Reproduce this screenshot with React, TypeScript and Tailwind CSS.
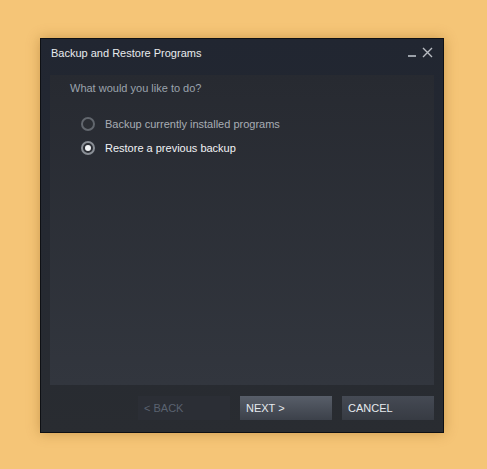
import React from "react";

export default function App() {
  return (
    <div className="w-[487px] h-[469px] bg-[#f5c577] flex items-start justify-start" style={{ fontFamily: '"Liberation Sans", Arial, sans-serif' }}>
      <div className="mt-[38px] ml-[40px] w-[404px] h-[395px] border border-[#0e1014] bg-gradient-to-b from-[#212631] to-[#292c31] flex flex-col shadow-[0_0_12px_rgba(150,100,30,0.45)]">
        <div className="flex items-start justify-between h-[36px] pl-[10px] pr-[10px] pt-[8px]">
          <span className="text-[11px] text-[#e8ebee] leading-[13px]">Backup and Restore Programs</span>
          <div className="flex items-center gap-[5px] mt-[-1px]">
            <svg width="9" height="12" viewBox="0 0 9 12"><rect x="0" y="9" width="8" height="2" fill="#9aa0a8" /></svg>
            <svg width="11" height="11" viewBox="0 0 11 11"><path d="M1 1 L10 10 M10 1 L1 10" stroke="#b8bcc2" strokeWidth="1.4" /></svg>
          </div>
        </div>
        <div className="mx-[9px] h-[310px] bg-gradient-to-b from-[#272a31] to-[#32363e] flex flex-col">
          <div className="pl-[20px] pt-[6px] text-[11px] leading-[14px] text-[#9ba3ad]">What would you like to do?</div>
          <div className="pl-[31px] pt-[22px] flex flex-col gap-[10px]">
            <div className="flex items-center gap-[10px]">
              <div className="w-[14px] h-[14px] rounded-full border-2 border-[#62676e] bg-[#2b2e34]" />
              <span className="text-[11px] leading-[14px] text-[#a8adb4]">Backup currently installed programs</span>
            </div>
            <div className="flex items-center gap-[10px]">
              <div className="w-[14px] h-[14px] rounded-full border-2 border-[#898e95] bg-[#2b2e34] flex items-center justify-center">
                <div className="w-[6px] h-[6px] rounded-full bg-[#f2f4f6]" />
              </div>
              <span className="text-[11px] leading-[14px] text-[#f0f2f4]">Restore a previous backup</span>
            </div>
          </div>
        </div>
        <div className="flex justify-end gap-[10px] pr-[9px] pt-[11px]">
          <div className="w-[92px] h-[24px] bg-[#2b2e35] text-[11px] text-[#5a6270] flex items-center pl-[6px]">&lt; BACK</div>
          <div className="w-[92px] h-[24px] bg-gradient-to-b from-[#585e69] to-[#3c414a] text-[11px] text-[#e6eaee] flex items-center pl-[6px]">NEXT &gt;</div>
          <div className="w-[92px] h-[24px] bg-gradient-to-b from-[#454a54] to-[#373b43] text-[11px] text-[#e6eaee] flex items-center pl-[6px]">CANCEL</div>
        </div>
      </div>
    </div>
  );
}
